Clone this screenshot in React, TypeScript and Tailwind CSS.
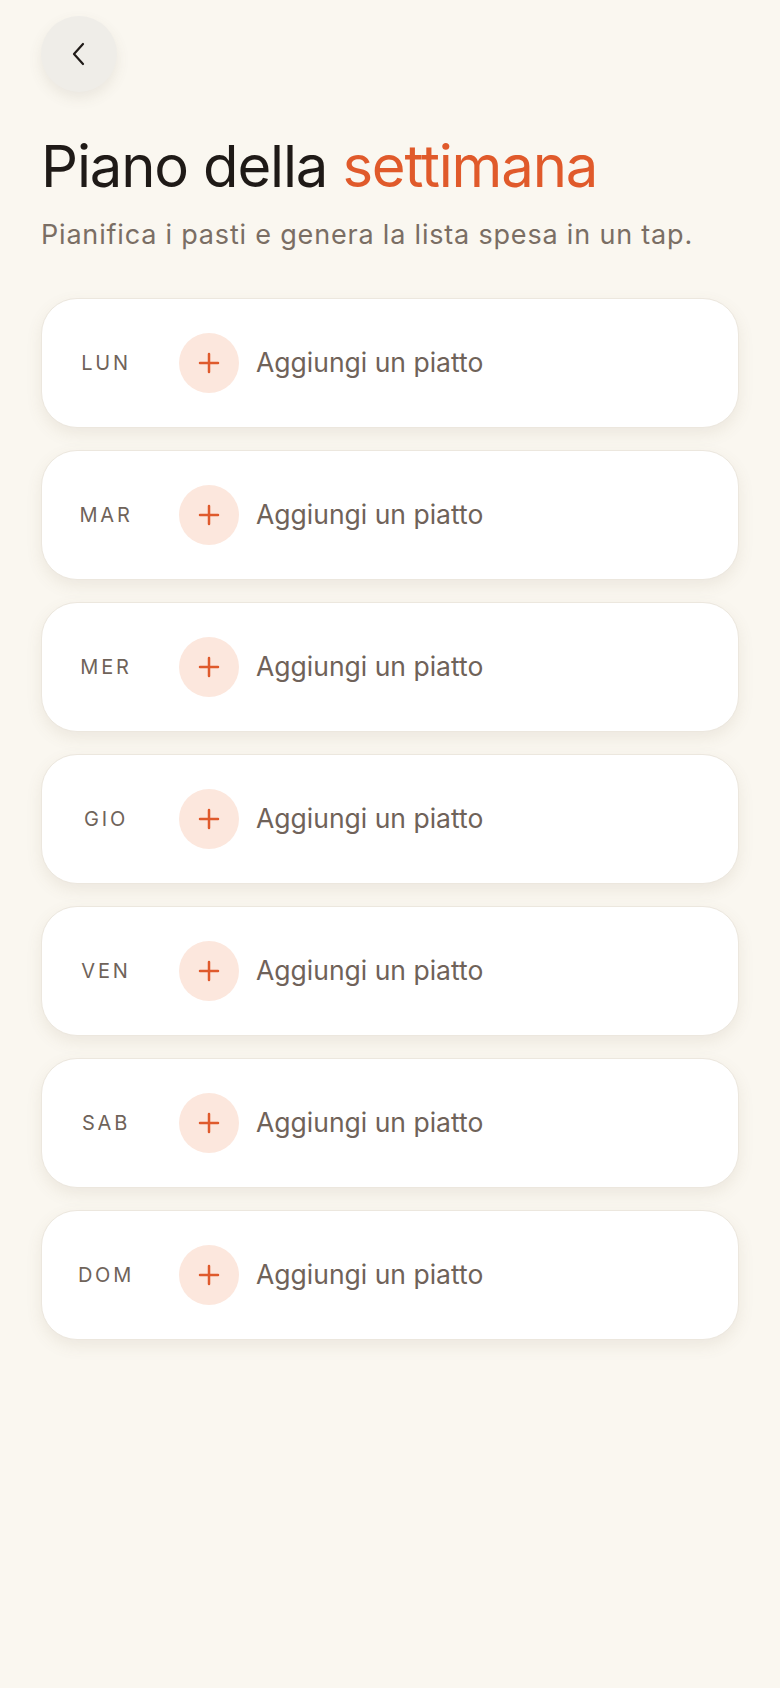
import React from "react";

const days = ["LUN", "MAR", "MER", "GIO", "VEN", "SAB", "DOM"];

function DayCard({ day }: { day: string }) {
  return (
    <div className="flex h-[130px] items-center rounded-[36px] border border-[#ece7de] bg-white pl-[32px] shadow-[0_6px_16px_rgba(120,100,70,0.10)]">
      <div className="w-[64px] text-center text-[20px] tracking-[0.14em] text-[#6f635a]">{day}</div>
      <div className="ml-[41px] flex h-[60px] w-[60px] items-center justify-center rounded-full bg-[#fce7dd]">
        <svg width="22" height="22" viewBox="0 0 22 22" fill="none">
          <path d="M11 2v18M2 11h18" stroke="#df5a2c" strokeWidth="2.5" strokeLinecap="round" />
        </svg>
      </div>
      <div className="ml-[17px] text-[26.5px] text-[#6f6259]">Aggiungi un piatto</div>
    </div>
  );
}

export default function App() {
  return (
    <div
      className="min-h-[1688px] w-full bg-[#faf7f0] px-[41px] pt-[16px]"
      style={{ fontFamily: "Inter, 'Noto Sans', sans-serif" }}
    >
      <button className="flex h-[76px] w-[76px] items-center justify-center rounded-full bg-[#efede8] shadow-[0_6px_14px_rgba(100,90,70,0.10)]">
        <svg width="14" height="24" viewBox="0 0 14 24" fill="none">
          <path d="M11 2L2 12l9 10" stroke="#1f1a17" strokeWidth="2.2" strokeLinecap="round" strokeLinejoin="round" />
        </svg>
      </button>
      <h1 className="mt-[36px] text-[58px] leading-[76px] tracking-[-0.02em] text-[#1f1a17]">
        Piano della <span className="text-[#e05a2b]">settimana</span>
      </h1>
      <p className="mt-[14px] text-[27px] leading-[34px] tracking-[0.03em] text-[#7a6e64]">
        Pianifica i pasti e genera la lista spesa in un tap.
      </p>
      <div className="mt-[46px] flex flex-col gap-[22px]">
        {days.map((d) => (
          <DayCard key={d} day={d} />
        ))}
      </div>
    </div>
  );
}
